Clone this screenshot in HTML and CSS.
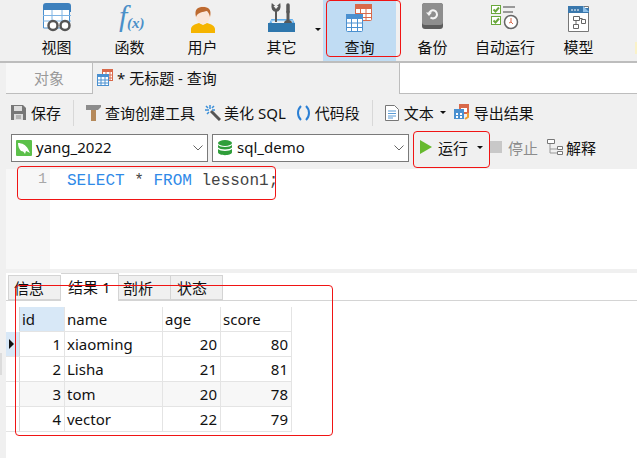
FILE: index.html
```html
<!DOCTYPE html>
<html lang="zh-CN">
<head>
<meta charset="utf-8">
<title>查询</title>
<link rel="stylesheet" href="styles.css">
</head>
<body>
<div class="app">
  <header class="ribbon">
    <div class="rb rb-view"><svg width="30" height="30" viewBox="0 0 30 30"><path d="M1 9V3a3 3 0 0 1 3-3h22a3 3 0 0 1 3 3v6z" fill="#3d80bd"/><path d="M1.500 4v21h26V4" fill="#fff" stroke="#4a90d0"/><path d="M1 4h28v3H1z" fill="#3d80bd"/><path d="M1 12.500h28M1 18h28M10 7v18M20 7v18" stroke="#7fb4e4"/><circle cx="11" cy="22.500" r="4.500" fill="#fff" stroke="#555" stroke-width="2.500"/><circle cx="23" cy="22.500" r="4.500" fill="#fff" stroke="#555" stroke-width="2.500"/></svg><span>视图</span></div>
    <div class="rb rb-func"><svg class="fx" width="30" height="30" viewBox="0 0 30 30"><text x="4" y="23" class="fx-f">f</text><text x="12" y="25" class="fx-x">(x)</text></svg><span>函数</span></div>
    <div class="rb rb-user"><svg width="30" height="30" viewBox="0 0 30 30"><path d="M3 30v-4c0-3 4-5 8-6l4 2 4-2c4 1 8 3 8 6v4z" fill="#f5b400"/><ellipse cx="15" cy="12" rx="7.500" ry="9" fill="#fbe6d8"/><path d="M8 14C6 6 10 4 15 4s9 2 7 10c-.5-3-2-5-3-6-4 1-9 1-11 6z" fill="#bd6a30"/></svg><span>用户</span></div>
    <div class="rb rb-other"><svg width="30" height="30" viewBox="0 0 30 30"><path d="M3 21l2-4h20l2 4" fill="none" stroke="#62b0ee" stroke-width="2"/><path d="M1 20h27v9H1z" fill="#2f77ad"/><path d="M4 18h22" stroke="#cfe5f6"/><path d="M9 19V8C6 8 5 5 5.500 2L9 5l3.500-3C13 5 12 8 9 8" fill="#585858" stroke="#585858" stroke-width="2"/><path d="M6.500 3L9 6l2.500-3z" fill="#f0f0f0"/><path d="M21 19V8" stroke="#585858" stroke-width="3"/><path d="M21 9V2" stroke="#585858" stroke-width="3.500" stroke-linecap="round"/><path d="M17 20c0-2 2-3 4-3s4 1 4 3z" fill="#585858"/></svg><span>其它</span></div>
    <i class="rb-caret"></i>
    <div class="rb rb-query"><svg width="30" height="30" viewBox="0 0 30 30"><rect x="10.500" y="1.500" width="16" height="16" rx="1" fill="#fff" stroke="#d9694a"/><rect x="10" y="1" width="17" height="5" fill="#d9694a"/><path d="M10 10.500h17M10 14.500h17M15.500 6v12M21 6v12" stroke="#d9694a"/><rect x="1.500" y="11.500" width="16" height="17" rx="1" fill="#fff" stroke="#4a90d0"/><rect x="1" y="11" width="17" height="5" fill="#4a90d0"/><path d="M1 20h17M1 24.500h17M6.500 16v12M12.500 16v12" stroke="#4a90d0"/></svg><span>查询</span></div>
    <div class="rb rb-backup"><svg width="30" height="30" viewBox="0 0 30 30"><rect x="4" y="0" width="21" height="26" rx="3" fill="#5d5d5d"/><rect x="4" y="0" width="21" height="22" rx="3" fill="#8e8e8e"/><path d="M11 11a4 4 0 1 1 1.500 3.500" fill="none" stroke="#f4f4f4" stroke-width="2"/><path d="M8 9.500h6l-3 3.500z" fill="#f4f4f4"/></svg><span>备份</span></div>
    <div class="rb rb-auto"><svg width="30" height="30" viewBox="0 0 30 30"><rect x="1.500" y="2.500" width="9" height="8" fill="#fff" stroke="#6aa83c"/><path d="M3.500 6.500l2 2 3.500-4" fill="none" stroke="#6aa83c" stroke-width="2"/><rect x="1.500" y="13.500" width="9" height="8" fill="#fff" stroke="#6aa83c"/><path d="M3.500 17.500l2 2 3.500-4" fill="none" stroke="#6aa83c" stroke-width="2"/><path d="M13 4h12M13 9h10" stroke="#999" stroke-width="2"/><circle cx="21" cy="19" r="6.500" fill="#fff" stroke="#666" stroke-width="1.500"/><path d="M21 15v4l2 2M21 19l-2 1" stroke="#d9694a" fill="none"/></svg><span>自动运行</span></div>
    <div class="rb rb-model"><svg width="30" height="30" viewBox="0 0 30 30"><path d="M4.500 3.500h20v25h-20z" fill="#fff" stroke="#777"/><path d="M4 3h15l2 2h4v5H4z" fill="#3a78ad"/><path d="M19 3l6 6h-6z" fill="#8fc1ea"/><path d="M7 7h2M10 7h2M13 7h2" stroke="#fff"/><path d="M9.500 13.500h6v4h-6zM17.500 16.500h4v4h-4zM9.500 21.500h5v4h-5z" fill="#fff" stroke="#666"/><path d="M15.500 15.500h3M12 17.500v4" stroke="#666"/></svg><span>模型</span></div>
    <i class="rb-hint"></i>
  </header>

  <nav class="doc-tabs">
    <div class="doc-edge"></div>
    <div class="doc-obj">对象</div>
    <div class="doc-cur"><svg width="17" height="17" viewBox="0 0 17 17"><rect x="5.500" y="0.500" width="10" height="11" fill="#fff" stroke="#d9694a"/><rect x="5" y="0" width="11" height="3" fill="#d9694a"/><path d="M5 6h11M5 9h11M9 3v9M13 3v9" stroke="#d9694a"/><rect x="0.500" y="5.500" width="11" height="11" fill="#fff" stroke="#4a90d0"/><rect x="0" y="5" width="12" height="3" fill="#4a90d0"/><path d="M0 11h12M0 14h12M4 8v9M8 8v9" stroke="#4a90d0"/></svg><span>* 无标题 - 查询</span></div>
    <div class="doc-rest"></div>
  </nav>

  <main class="pane">
    <div class="toolbar">
      <span class="tb tb-save"><svg width="15" height="15" viewBox="0 0 15 15"><path d="M0 0h12l3 3v12H0z" fill="#777"/><rect x="3" y="1" width="8" height="5" fill="#ddd"/><rect x="3" y="9" width="9" height="6" fill="#ddd"/><path d="M5 11h5M5 13h5" stroke="#888"/></svg>保存</span>
      <i class="sep sep-a"></i>
      <span class="tb tb-build"><svg width="15" height="16" viewBox="0 0 15 16"><path d="M0 0h15v2l-3 3H0z" fill="#8c8c8c"/><rect x="5" y="5" width="5" height="11" fill="#b5895a"/></svg>查询创建工具</span>
      <span class="tb tb-beauty"><svg width="16" height="16" viewBox="0 0 16 16"><path d="M6 6l9 9" stroke="#555" stroke-width="3"/><path d="M5 0v4M0 5h4M9 1L7 3M1 1l2 2M2 9l2-2M10 5H7" stroke="#3b8fd8" stroke-width="1.500"/></svg>美化 SQL</span>
      <span class="tb tb-snip"><svg width="15" height="16" viewBox="0 0 15 16"><path d="M5 1C1 5 1 11 5 15M10 1c4 4 4 10 0 14" fill="none" stroke="#2b7fd4" stroke-width="2"/></svg>代码段</span>
      <i class="sep sep-b"></i>
      <span class="tb tb-text"><svg width="14" height="16" viewBox="0 0 14 16"><path d="M.5.500h9l4 4v11H.5z" fill="#fff" stroke="#777"/><path d="M3 6h8M3 8.500h8M3 11h8M3 13h5" stroke="#5b9bd5"/></svg>文本<i class="mini"></i></span>
      <span class="tb tb-export"><svg width="17" height="17" viewBox="0 0 17 17"><rect x="5" y="0" width="10" height="10" fill="#d9694a"/><path d="M7 4h6v4H7z" fill="#fff"/><rect x="0" y="5" width="10" height="10" fill="#4a90d0"/><path d="M2 9h2v2H2zM6 9h2v2H6zM2 12h2v2H2zM6 12h2v2H6z" fill="#fff"/><path d="M14 9v4l-3 2" fill="none" stroke="#f0a030" stroke-width="2"/></svg>导出结果</span>
    </div>
    <div class="actionbar">
      <div class="combo combo-conn"><svg width="16" height="16" viewBox="0 0 16 16"><rect width="16" height="16" rx="1" fill="#5cc04a"/><path d="M2 3c4 0 8 2 10 6l2 4c-2-1-3-2-4-2l-1 3c-1-2-2-3-4-3C3 9 2 6 2 3z" fill="#fff"/></svg><span>yang_2022</span><svg class="chev" width="10" height="6" viewBox="0 0 10 6"><path d="M.5.500L5 5 9.500.500" fill="none" stroke="#666"/></svg></div>
      <div class="combo combo-db"><svg width="16" height="16" viewBox="0 0 16 16"><ellipse cx="8" cy="3" rx="7" ry="3" fill="#2f9e3a"/><path d="M1 5c2 2.500 12 2.500 14 0v2.500c-2 2.500-12 2.500-14 0zM1 9c2 2.500 12 2.500 14 0v3.500c-1 3.500-13 3.500-14 0z" fill="#2f9e3a"/></svg><span>sql_demo</span><svg class="chev" width="10" height="6" viewBox="0 0 10 6"><path d="M.5.500L5 5 9.500.500" fill="none" stroke="#666"/></svg></div>
      <div class="run"><i class="play"></i>运行<i class="mini"></i></div>
      <span class="stop"><i class="stop-box"></i>停止</span>
      <span class="explain"><svg width="16" height="16" viewBox="0 0 16 16"><path d="M.5.500h7v4h-7zM10.500 7.500h5v3h-5zM10.500 12.500h5v3h-5z" fill="#fff" stroke="#777"/><path d="M3 5v5h7M3 10v4h7" fill="none" stroke="#999"/></svg>解释</span>
    </div>
    <section class="editor">
      <div class="gutter">1</div>
      <pre class="code"><span class="kw">SELECT</span> * <span class="kw">FROM</span> lesson1;</pre>
    </section>
    <div class="results">
      <div class="res-tabs">
        <span class="rt rt-info">信息</span>
        <span class="rt rt-on">结果 1</span>
        <span class="rt rt-prof">剖析</span>
        <span class="rt rt-stat">状态</span>
      </div>
      <div class="grid">
        <div class="mark mark-head"></div>
        <div class="h h-sel">id</div><div class="h">name</div><div class="h">age</div><div class="h">score</div>
        <div class="mark mark-on"></div>
        <div class="c n">1</div><div class="c">xiaoming</div><div class="c n">20</div><div class="c n">80</div>
        <div class="mark"></div>
        <div class="c n">2</div><div class="c">Lisha</div><div class="c n">21</div><div class="c n">81</div>
        <div class="mark"></div>
        <div class="c n alt">3</div><div class="c alt">tom</div><div class="c n alt">20</div><div class="c n alt">78</div>
        <div class="mark"></div>
        <div class="c n">4</div><div class="c">vector</div><div class="c n">22</div><div class="c n">79</div>
      </div>
    </div>
  </main>

  <div class="scroll-thumb"></div>
  <div class="note note-query"></div>
  <div class="note note-run"></div>
  <div class="note note-sql"></div>
  <div class="note note-table"></div>
</div>
</body>
</html>
```

FILE: styles.css
```css
* { box-sizing: border-box; }
html, body { margin: 0; padding: 0; }
body {
  width: 637px;
  height: 458px;
  overflow: hidden;
  background: #fff;
  color: #111;
  font-family: "Noto Sans", "Noto Sans CJK SC", sans-serif;
  font-size: 15px;
}
.app { position: relative; width: 637px; height: 458px; overflow: hidden; }
svg { display: block; flex: none; }
i { display: block; }

/* ribbon */
.ribbon {
  display: flex;
  height: 63px;
  background: #f0f0f0;
  border-bottom: 2px solid #bdbdbd;
}
.rb {
  display: flex;
  flex-direction: column;
  align-items: center;
  flex: none;
  padding-top: 3px;
  height: 61px;
}
.rb svg { margin-bottom: 4px; }
.rb span { line-height: 20px; white-space: nowrap; }
.rb-view { width: 37px; margin-left: 38px; }
.rb-func { width: 37px; margin-left: 36px; }
.rb-user { width: 37px; margin-left: 36px; }
.rb-other { width: 37px; margin-left: 42px; }
.rb-caret {
  margin: 28px 0 0 15px;
  width: 0;
  height: 0;
  border-left: 3px solid transparent;
  border-right: 3px solid transparent;
  border-top: 3px solid #111;
}
.rb-query { width: 73px; margin-left: 2px; background: #c0dcf3; }
.rb-backup { width: 37px; margin-left: 18px; }
.rb-auto { width: 62px; margin-left: 23px; }
.rb-model { width: 37px; margin-left: 24px; }
.rb-hint { width: 2px; height: 12px; margin: 42px 0 0 auto; background: #faf2c8; }
.fx { overflow: visible; }
.fx-f { font: italic 400 30px "Liberation Serif", serif; fill: #4a8fc8; }
.fx-x { font: italic 700 15px "Liberation Serif", serif; fill: #4a8fc8; }

/* document tabs */
.doc-tabs { display: flex; height: 31px; background: #f0f0f0; }
.doc-edge { width: 6px; }
.doc-obj {
  width: 87px;
  background: #f7f7f7;
  border-right: 1px solid #bdbdbd;
  border-bottom: 1px solid #bdbdbd;
  color: #999;
  text-align: center;
  line-height: 30px;
}
.doc-cur {
  width: 306px;
  display: flex;
  align-items: center;
  gap: 3px;
  padding: 0 0 2px 4px;
  white-space: pre;
}
.doc-rest {
  flex: 1;
  background: #fff;
  border-left: 1px solid #bdbdbd;
  border-bottom: 1px solid #bdbdbd;
}

/* query pane */
.pane { background: #f0f0f0; padding-left: 6px; height: 364px; }
.toolbar {
  display: flex;
  align-items: center;
  height: 37px;
  padding-left: 5px;
}
.tb { display: flex; align-items: center; gap: 5px; white-space: nowrap; flex: none; }
.sep { width: 1px; height: 26px; background: #d8d8d8; flex: none; }
.sep-a { margin: 0 12px; }
.tb-build { gap: 4px; }
.tb-beauty { margin-left: 10px; gap: 3px; }
.tb-snip { margin-left: 10px; gap: 4px; }
.sep-b { margin: 0 12px; }
.tb-export { margin-left: 8px; gap: 3px; }
.mini {
  width: 0;
  height: 0;
  margin-left: 1px;
  border-left: 3px solid transparent;
  border-right: 3px solid transparent;
  border-top: 3px solid #111;
}
.actionbar { display: flex; align-items: center; height: 38px; padding: 0 0 4px 5px; }
.combo {
  display: flex;
  align-items: center;
  gap: 4px;
  height: 28px;
  background: #fff;
  border: 1px solid #7a7a7a;
  padding-left: 4px;
  flex: none;
}
.combo span { margin-bottom: 2px; }
.combo .chev { margin-left: auto; margin-right: 4px; }
.combo-conn { width: 197px; }
.combo-db { width: 197px; margin-left: 4px; }
.run { display: flex; align-items: center; width: 77px; margin-left: 4px; padding: 0 0 2px 7px; gap: 6px; flex: none; }
.run .mini { margin-left: 3px; }
.play {
  width: 0;
  height: 0;
  border-left: 12px solid #66b92e;
  border-top: 7px solid transparent;
  border-bottom: 7px solid transparent;
}
.stop { display: flex; align-items: center; gap: 6px; padding-bottom: 2px; color: #8c8c8c; flex: none; }
.stop-box { width: 12px; height: 12px; background: #c8c8c8; }
.explain { display: flex; align-items: center; gap: 3px; padding-bottom: 2px; margin-left: 9px; flex: none; }

.editor { display: flex; height: 100px; background: #fff; }
.gutter {
  width: 44px;
  background: #f7f7f7;
  color: #a8a8a8;
  text-align: right;
  padding-right: 3px;
  font: 15px/22px "Liberation Mono", monospace;
}
.code {
  margin: 1px 0 0 17px;
  font: 16px/22px "Liberation Mono", monospace;
  color: #444;
}
.kw { color: #2f8ae8; }

/* results */
.results { height: 191px; background: #fff; margin-top: 4px; }
.res-tabs {
  display: flex;
  align-items: flex-end;
  height: 28px;
  padding-left: 2px;
  border-bottom: 1px solid #d4d4d4;
}
.rt {
  height: 25px;
  width: 52px;
  background: #f0f0f0;
  border: 1px solid #d4d4d4;
  border-left: 0;
  padding-left: 5px;
  line-height: 25px;
  flex: none;
}
.rt-info { width: 53px; border-left: 1px solid #d4d4d4; }
.rt-on { height: 28px; width: 58px; margin-bottom: -1px; background: #fff; border-bottom: 0; padding-left: 7px; line-height: 26px; }
.rt-prof { padding-left: 4px; }
.rt-stat { padding-left: 6px; }
.grid {
  display: grid;
  grid-template-columns: 14px 45px 98px 58px 71px;
  grid-auto-rows: 25px;
  width: 286px;
  margin-top: 6px;
}
.h, .c {
  border-right: 1px solid #e4e4e4;
  border-bottom: 1px solid #e4e4e4;
  padding: 0 3px 0 2px;
  line-height: 24px;
  white-space: nowrap;
}
.h-sel { background: #d8e8f7; }
.n { text-align: right; }
.alt { background: #f7f7f7; }
.mark { border-bottom: 1px solid #e4e4e4; border-right: 1px solid #d4d4d4; position: relative; }
.mark-head { border-bottom-color: transparent; }
.mark-on { background: #d8e8f7; }
.mark-on::after {
  content: "";
  position: absolute;
  left: 3px;
  top: 7px;
  border-left: 5px solid #111;
  border-top: 5px solid transparent;
  border-bottom: 5px solid transparent;
}

.scroll-thumb { position: absolute; left: 0; top: 353px; width: 2px; height: 22px; background: #dcdcdc; }

/* annotations over the screenshot */
.note { position: absolute; border: 1px solid #f01414; border-radius: 4px; pointer-events: none; }
.note-query { left: 326px; top: 0; width: 75px; height: 57px; }
.note-run { left: 413px; top: 131px; width: 77px; height: 37px; }
.note-sql { left: 17px; top: 166px; width: 259px; height: 34px; }
.note-table { left: 15px; top: 285px; width: 318px; height: 151px; }
```
